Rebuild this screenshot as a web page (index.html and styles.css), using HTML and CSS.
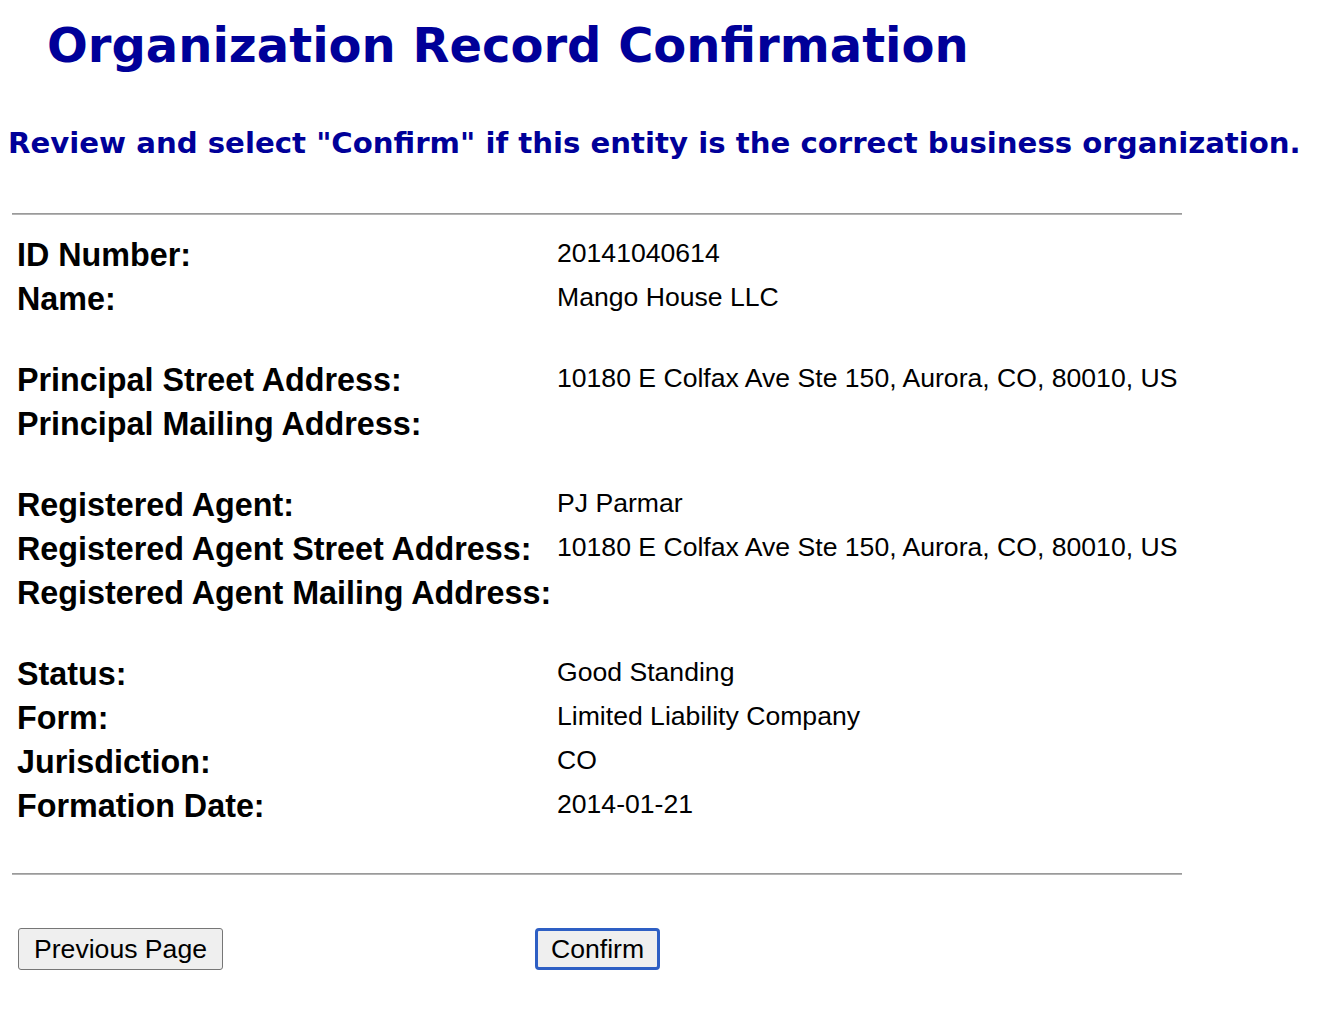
FILE: index.html
```html
<!DOCTYPE html>
<html lang="en">
<head>
<meta charset="utf-8">
<title>Organization Record Confirmation</title>
<link rel="stylesheet" href="styles.css">
</head>
<body>
<h1 class="title">Organization Record Confirmation</h1>
<h2 class="subtitle">Review and select "Confirm" if this entity is the correct business organization.</h2>
<hr class="rule rule-top">
<div class="record">
  <div class="label">ID Number:</div><div class="value">20141040614</div>
  <div class="label">Name:</div><div class="value">Mango House LLC</div>
  <div class="spacer"></div>
  <div class="label">Principal Street Address:</div><div class="value">10180 E Colfax Ave Ste 150, Aurora, CO, 80010, US</div>
  <div class="label">Principal Mailing Address:</div><div class="value"></div>
  <div class="spacer"></div>
  <div class="label">Registered Agent:</div><div class="value">PJ Parmar</div>
  <div class="label">Registered Agent Street Address:</div><div class="value">10180 E Colfax Ave Ste 150, Aurora, CO, 80010, US</div>
  <div class="label">Registered Agent Mailing Address:</div><div class="value"></div>
  <div class="spacer"></div>
  <div class="label">Status:</div><div class="value">Good Standing</div>
  <div class="label">Form:</div><div class="value">Limited Liability Company</div>
  <div class="label">Jurisdiction:</div><div class="value">CO</div>
  <div class="label">Formation Date:</div><div class="value">2014-01-21</div>
</div>
<hr class="rule rule-bottom">
<div class="actions">
  <button type="button" class="btn">Previous Page</button>
  <button type="button" class="btn btn-focus">Confirm</button>
</div>
</body>
</html>
```

FILE: styles.css
```css
html, body {
  background: #ffffff;
}
body {
  margin: 8px;
  font-family: "Liberation Sans", Arial, sans-serif;
  color: #000000;
}
.title {
  font-family: "DejaVu Sans", Verdana, sans-serif;
  font-weight: bold;
  font-size: 48px;
  line-height: 60px;
  color: #000099;
  margin: 7px 0 0 39px;
}
.subtitle {
  font-family: "DejaVu Sans", Verdana, sans-serif;
  font-weight: bold;
  font-size: 29.2px;
  line-height: 36px;
  color: #000099;
  margin: 50px 0 0 0;
}
.rule {
  width: 1170px;
  margin: 0 0 0 4px;
  border: 0;
  border-top: 1px solid #9a9a9a;
  border-bottom: 1px solid #b4b4b4;
  height: 0;
}
.rule-top {
  margin-top: 52px;
}
.record {
  display: grid;
  grid-template-columns: 540px auto;
  align-items: center;
  margin: 18px 0 0 9px;
}
.label {
  font-weight: bold;
  font-size: 32.3px;
  line-height: 44px;
}
.value {
  font-size: 26.6px;
  line-height: 44px;
  position: relative;
  top: -2px;
}
.spacer {
  grid-column: 1 / 3;
  height: 37px;
}
.rule-bottom {
  margin-top: 45px;
}
.actions {
  display: flex;
  gap: 312px;
  margin: 53px 0 0 10px;
}
.btn {
  font-family: "Liberation Sans", Arial, sans-serif;
  font-size: 26.6px;
  background: #efefef;
  color: #000;
  border: 1px solid #767676;
  border-radius: 3px;
  height: 42px;
  padding: 0 15px;
}
.btn-focus {
  border: 3px solid #2e5fc4;
  border-radius: 4px;
  padding: 0 13px;
}
```
